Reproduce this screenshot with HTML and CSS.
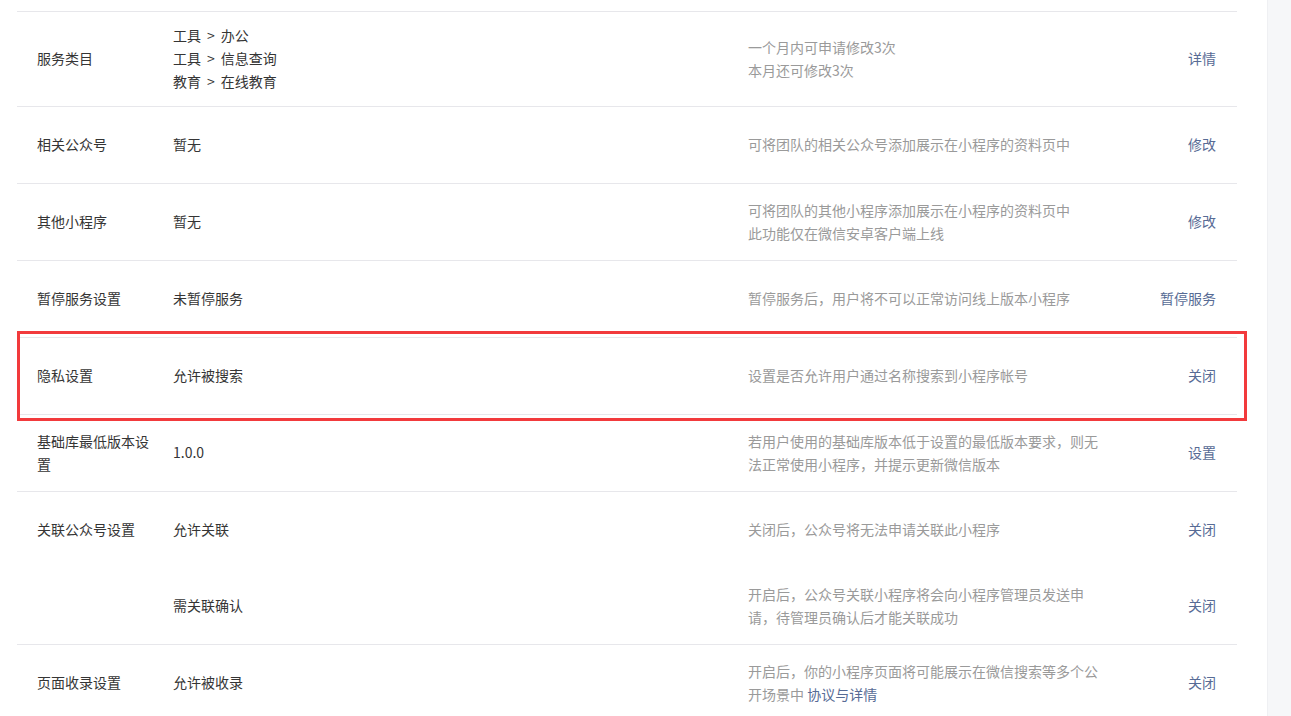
FILE: index.html
```html
<!DOCTYPE html>
<html lang="zh-CN">
<head>
    <meta charset="UTF-8">
    <title>设置</title>
    <link rel="stylesheet" href="styles.css">
</head>
<body>
    <div class="page">
        <div class="main">
            <div class="setting-list">
                <div class="row">
                    <div class="label">服务类目</div>
                    <div class="value">
                        <p>工具<span class="sep">&gt;</span>办公</p>
                        <p>工具<span class="sep">&gt;</span>信息查询</p>
                        <p>教育<span class="sep">&gt;</span>在线教育</p>
                    </div>
                    <div class="desc">一个月内可申请修改3次<br>本月还可修改3次</div>
                    <div class="action"><a href="#">详情</a></div>
                </div>

                <div class="row">
                    <div class="label">相关公众号</div>
                    <div class="value">暂无</div>
                    <div class="desc">可将团队的相关公众号添加展示在小程序的资料页中</div>
                    <div class="action"><a href="#">修改</a></div>
                </div>

                <div class="row">
                    <div class="label">其他小程序</div>
                    <div class="value">暂无</div>
                    <div class="desc">可将团队的其他小程序添加展示在小程序的资料页中<br>此功能仅在微信安卓客户端上线</div>
                    <div class="action"><a href="#">修改</a></div>
                </div>

                <div class="row">
                    <div class="label">暂停服务设置</div>
                    <div class="value">未暂停服务</div>
                    <div class="desc">暂停服务后，用户将不可以正常访问线上版本小程序</div>
                    <div class="action"><a href="#">暂停服务</a></div>
                </div>

                <div class="row marked">
                    <div class="label">隐私设置</div>
                    <div class="value">允许被搜索</div>
                    <div class="desc">设置是否允许用户通过名称搜索到小程序帐号</div>
                    <div class="action"><a href="#">关闭</a></div>
                </div>

                <div class="row">
                    <div class="label">基础库最低版本设置</div>
                    <div class="value">1.0.0</div>
                    <div class="desc">若用户使用的基础库版本低于设置的最低版本要求，则无法正常使用小程序，并提示更新微信版本</div>
                    <div class="action"><a href="#">设置</a></div>
                </div>

                <!-- 关联公众号: two options, one group -->
                <div class="group">
                    <div class="row sub">
                        <div class="label">关联公众号设置</div>
                        <div class="value">允许关联</div>
                        <div class="desc">关闭后，公众号将无法申请关联此小程序</div>
                        <div class="action"><a href="#">关闭</a></div>
                    </div>
                    <div class="row sub">
                        <div class="label"></div>
                        <div class="value">需关联确认</div>
                        <div class="desc">开启后，公众号关联小程序将会向小程序管理员发送申请，待管理员确认后才能关联成功</div>
                        <div class="action"><a href="#">关闭</a></div>
                    </div>
                </div>

                <div class="row">
                    <div class="label">页面收录设置</div>
                    <div class="value">允许被收录</div>
                    <div class="desc">开启后，你的小程序页面将可能展示在微信搜索等多个公开场景中 <a href="#">协议与详情</a></div>
                    <div class="action"><a href="#">关闭</a></div>
                </div>
            </div>
        </div>
        <div class="side"></div>
    </div>
</body>
</html>
```

FILE: styles.css
```css
/* General */
body {
    margin: 0;
    padding: 0;
    background: #fff;
    font-family: "Microsoft YaHei", "Noto Sans CJK SC", "Liberation Sans", sans-serif;
    font-size: 14px;
    color: #353535;
    height: 716px;
    overflow: hidden;
}

a {
    color: #576b95;
    text-decoration: none;
}

p {
    margin: 0;
}

.page {
    display: flex;
    min-height: 716px;
}

.main {
    width: 1220px;
    padding: 11px 30px 0 17px;
}

.side {
    flex: 1;
    background-color: #f6f7f9;
    border-left: 1px solid #eff0f3;
}

/* Setting rows */
.setting-list {
    border-top: 1px solid #e7e7eb;
}

.row {
    display: flex;
    align-items: center;
    min-height: 51px;
    padding: 12px 21px 13px 20px;
    border-bottom: 1px solid #e7e7eb;
    line-height: 23px;
    position: relative;
}

.group {
    border-bottom: 1px solid #e7e7eb;
}

.group .row {
    border-bottom: none;
}

.label {
    width: 120px;
    padding-right: 16px;
    flex-shrink: 0;
}

.value {
    width: 575px;
    flex-shrink: 0;
}

.sep {
    margin: 0 6px;
}

.desc {
    width: 356px;
    color: #9a9a9a;
}

.action {
    flex: 1;
    text-align: right;
}

/* red annotation box */
.marked::after {
    content: "";
    position: absolute;
    top: -7px;
    left: 0;
    right: -10px;
    bottom: -7px;
    border: 3px solid #f23a3c;
}
```
